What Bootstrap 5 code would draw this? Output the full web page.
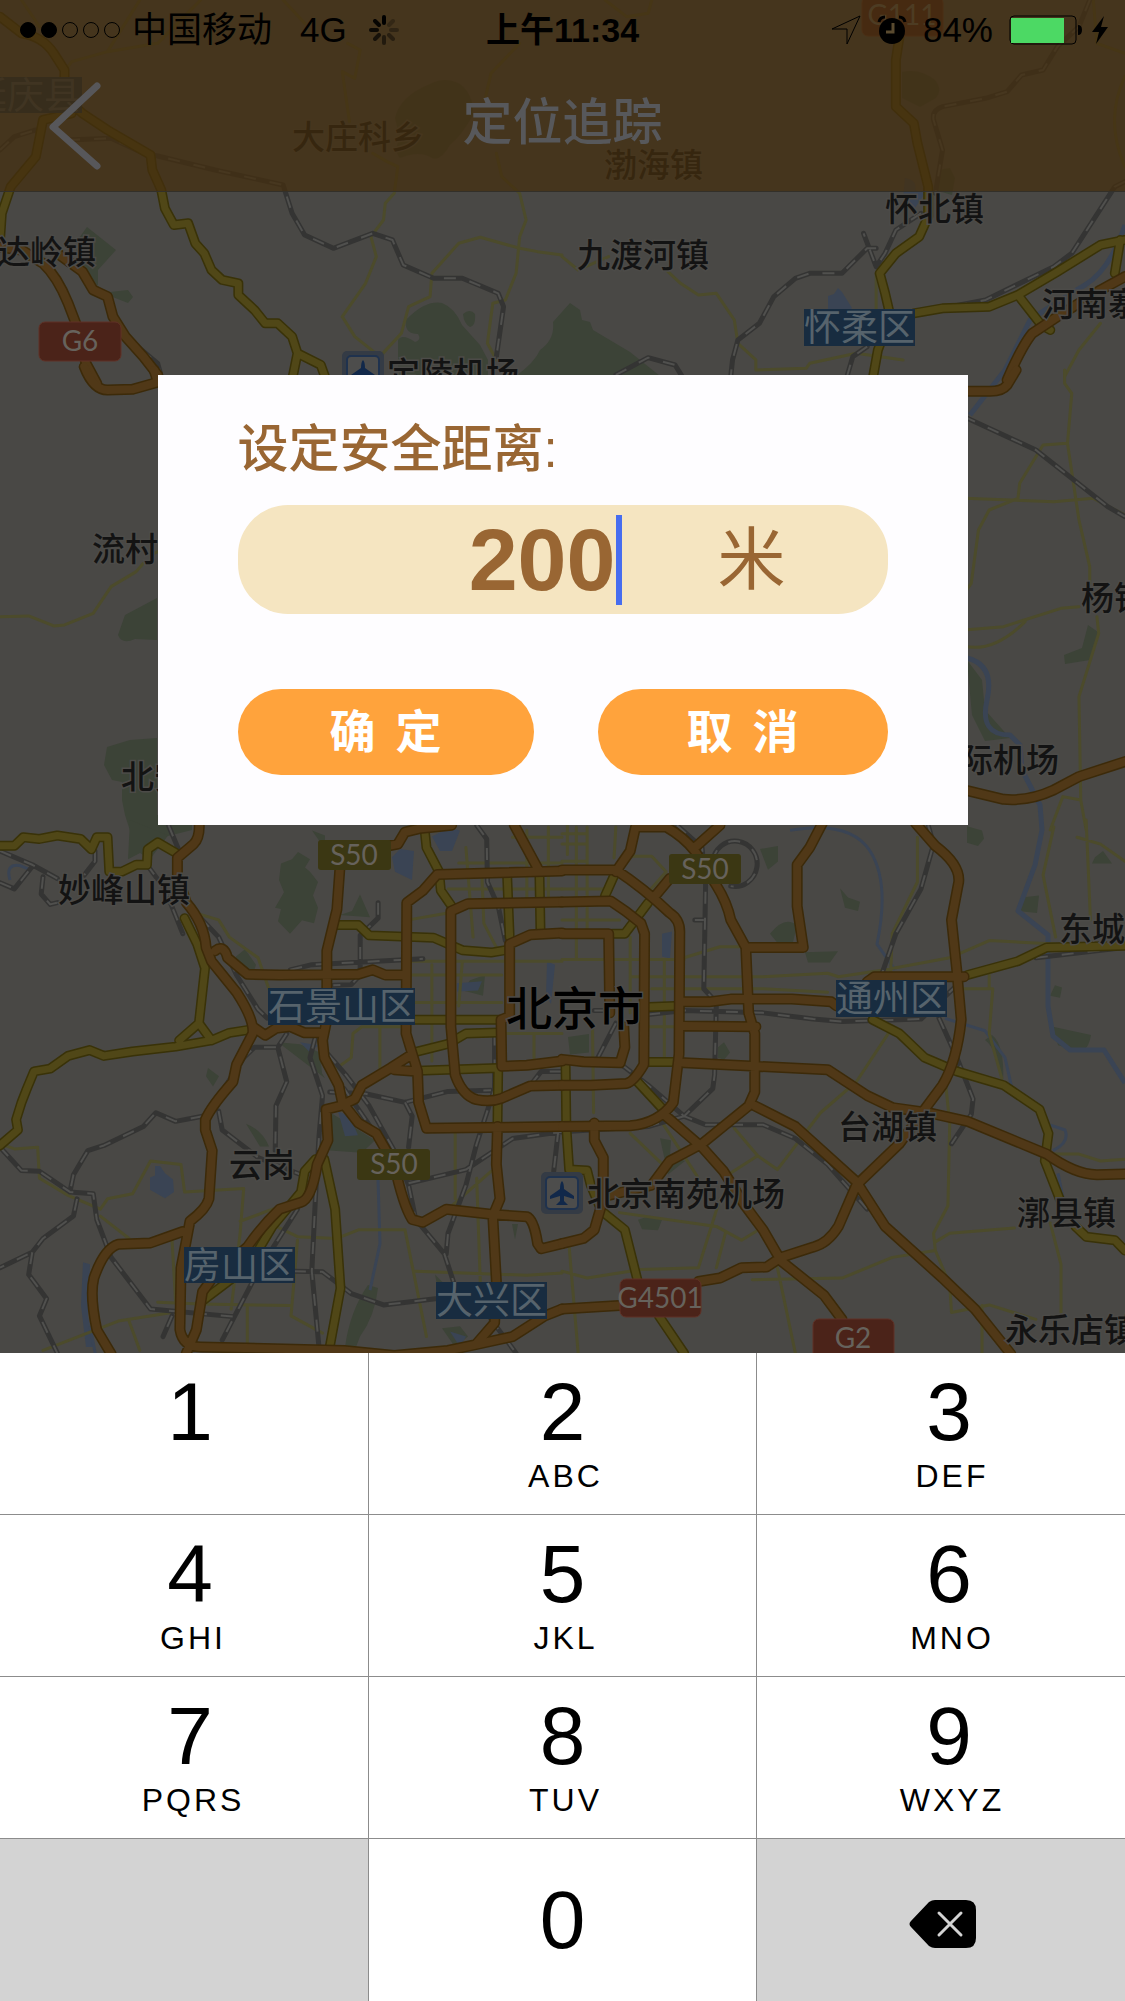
<!DOCTYPE html>
<html lang="zh-CN">
<head>
<meta charset="utf-8">
<meta name="viewport" content="width=device-width, initial-scale=1">
<title>定位追踪</title>
<link href="https://cdn.jsdelivr.net/npm/bootstrap@5.3.0/dist/css/bootstrap.min.css" rel="stylesheet">
<style>
  body { font-family: "Liberation Sans", "Noto Sans CJK SC", sans-serif; color: #000; background: #fff; }
  .map-area { background: #494845; overflow: hidden; }
  .map-art { inset: 0; }
  .map-art path, .map-art ellipse { vector-effect: non-scaling-stroke; }
  .lines { fill: none; stroke-linejoin: round; stroke-linecap: round; }
  .lane { stroke: #4c4b2b; stroke-width: 3px; }
  .rail-bed { stroke: #343433; stroke-width: 5px; }
  .rail-dash { stroke: #50504e; stroke-width: 2px; stroke-dasharray: 12 14; stroke-linecap: butt; }
  .yellow-edge { stroke: #393208; stroke-width: 10px; }
  .yellow-road { stroke: #504717; stroke-width: 7px; }
  .orange-edge { stroke: #3c2a09; stroke-width: 11px; }
  .orange-road { stroke: #503817; stroke-width: 8px; }
  .park { fill: #3c4337; }
  .lake { fill: #3a4454; }
  .river { fill: none; stroke: #3a4454; stroke-width: 5px; stroke-linejoin: round; }
  .creek { stroke-width: 3px; }
  .place { font: 500 33px "Noto Sans CJK SC", sans-serif; fill: #131313; stroke: #4c4b48; stroke-width: 3px; paint-order: stroke; }
  .city { font-size: 46px; fill: #000; }
  .district { font: 37px "Noto Sans CJK SC", sans-serif; fill: #56636c; }
  .road-no { font: 28px Lato, sans-serif; fill: #66625c; text-anchor: middle; }

  .top-bar { background: rgba(68, 46, 14, .72); border-bottom: 1px solid #333029; }
  .status-row { display: grid; grid-template-columns: 1fr auto 1fr; height: 60px; padding: 0 16px; font-size: 35px; line-height: 60px; }
  .signal-dots { gap: 5px; margin: 0 12px 0 4px; }
  .signal-dots i { width: 16px; height: 16px; border: 1px solid #000; border-radius: 50%; }
  .signal-dots .on { background: #000; }
  .net-type { margin: 0 22px 0 28px; }
  .clock-time { font-size: 34px; }
  .title-row { height: 131px; padding-bottom: 6px; }
  .page-title { font-size: 50px; line-height: 60px; font-weight: 500; color: #57585b; margin: 0; }
  .back-link { left: 44px; top: 76px; line-height: 0; }

  .distance-card { width: 72%; margin: 183px auto 0; height: 450px; padding: 39px 80px; background: #fefdff; }
  .card-label { font-size: 51px; line-height: 72px; font-weight: 500; color: #996633; margin-bottom: 19px; display: block; }
  .distance-field { height: 109px; border-radius: 50px; background: #f5e5c1; color: #996633; margin-bottom: 75px; }
  .distance-input { width: 378px; border: 0; padding: 0; background: transparent; color: inherit; font-size: 88px; line-height: 100px; font-weight: 700; text-align: right; outline: 0; }
  .caret { width: 6px; height: 90px; background: #476def; }
  .unit { font-size: 68px; line-height: 100px; margin-left: 96px; }
  .choices { display: grid; grid-template-columns: 296fr 290fr; gap: 64px; }
  .choice { height: 86px; border: 0; border-radius: 43px; background: #ffa33c; color: #fff; font-size: 46px; line-height: 86px; font-weight: 700; padding: 0; display: flex; justify-content: center; gap: 20px; }

  .keypad { display: grid; grid-template-columns: 369fr 388fr 368fr; grid-auto-rows: 162px; }
  .num-key { border: 0 solid #8c8c8c; border-width: 0 1px 1px 0; background: #fff; color: #000; padding: 14px 0 0; display: flex; flex-direction: column; align-items: center; }
  .num-key:nth-child(3n) { border-right: 0; padding-left: 16px; }
  .num-key:nth-child(3n+1) { padding-left: 12px; }
  .num-key:nth-child(n+10) { border-bottom: 0; justify-content: center; padding-top: 0; }
  .num-key.tinted { background: #d3d3d3; padding: 8px 0 0 4px; }
  .digit { font-size: 82px; line-height: 90px; }
  .letters { font-size: 32px; line-height: 38px; letter-spacing: 3px; padding-left: 6px; }
</style>
<script src="https://cdn.jsdelivr.net/npm/bootstrap@5.3.0/dist/js/bootstrap.bundle.min.js"></script>
</head>
<body>
<main class="d-flex flex-column min-vh-100">
<section class="map-area position-relative flex-grow-1">
<svg class="map-art position-absolute w-100 h-100" viewBox="0 0 1125 1353" preserveAspectRatio="xMidYMin slice" aria-label="北京地图" role="img">
<defs>
<g id="lanes">
 <g transform="scale(.3584 .3333)"><path d="M60 0L110 80M390 0L300 155L200 185L150 260M300 155L440 130L560 0M790 0L850 70M970 130L1005 150L990 235L955 215L975 365M1040 460L1080 485L1110 500L1100 580L1075 610L1070 660L1035 710L1050 770L1020 850L955 950L990 1010L1060 1070L1120 1000L1140 920L1200 890L1205 820L1280 730L1340 712L1450 745L1500 755L1568 765M1450 130L1370 220L1355 290M1385 460L1400 530L1450 580L1468 660L1450 710L1440 820L1410 900L1375 910L1360 1030L1385 1080"/></g>
 <g transform="translate(562) scale(.359 .3333)"><path d="M0 770L45 810L130 770M120 0L180 50L240 40L250 0M290 810L330 850L380 885L430 880L480 960L490 1030L540 1080L540 1110L680 1105L690 1090L820 1060L950 1080M875 820V930M1480 0L1490 130L1568 160M1568 230Q1510 360 1568 500M1500 970L1440 1050L1400 1130"/></g>
 <g transform="translate(0 370) scale(.3584 .3333)"><path d="M0 740L80 738L150 768L180 765L260 730L310 650L380 605L400 580M430 550L440 545"/></g>
 <g transform="translate(562 370) scale(.359 .3333)"><path d="M1400 0V40L1420 70L1408 220L1340 225L1275 340L1270 385M1120 385L1370 395L1480 385L1568 435M1408 220L1440 450L1470 590V640M1270 385L1190 420L1160 480L1140 640L1120 670M1120 780L1230 770L1390 715L1440 710M1120 828Q1200 850 1290 755M1490 740L1495 790L1440 980L1445 1290M1360 1380L1395 1280L1445 1290L1460 1380"/></g>
 <g transform="translate(0 820) scale(.3584 .3444)"><path d="M545 270L610 290L640 340L720 400L750 490M0 940L40 955L105 950L110 1040L190 1090L280 1130L300 1100L370 1085L420 990L505 1000L515 1080L680 1070L670 1200L645 1420M280 1150L360 1215M670 1165L760 1130M750 1170L830 1210L940 1215L1000 1190L1130 1190L1190 1500M120 1540L330 1455L480 1430M360 1455L390 1540M440 1400L560 1405L810 1410M830 1220L812 1440L900 1490M480 1220L490 1400M690 1410V1540M1160 1310L1470 1322L1568 1315M1330 1040L1340 1340M1370 1020L1250 1130M1270 910V1100M1250 200H1568M1280 125H1568M1140 290L1250 270M1300 80L1320 340M1345 170L1350 300L1385 370M1140 410H1568M1140 450H1400M1205 420V700M940 720L980 690L985 620L1010 600H1130M1060 600V720M1430 50H1568M1470 30V230M1530 20V230M1400 620H1568M1490 620V700M1160 530H1400M1290 410L1280 540"/></g>
 <g transform="translate(562 820) scale(.359 .3444)"><path d="M0 200H120M0 120H70M0 70H70M0 40H70M15 15V100M40 20V400M70 20V320M0 290H160M150 20L145 110M0 405H340M340 400L440 368H510M190 340V560M190 455H560L740 445L770 455L900 435L1080 400L1190 350L1370 360M250 490H560L740 500M285 410V700M85 600L88 850M240 600H320M1110 490H1200L1190 620L1225 750M1190 450V490M990 50V180L920 330L915 460M915 610L820 760L720 850L600 1015L545 975L480 895M545 975L470 1025M440 1100L380 1300L220 1305L70 1330L0 1310M1070 780L1080 880L1075 1120L1035 1200L1040 1250L920 1270L780 1330L530 1335M1040 1225L1080 1200L1260 1185M1040 1250L1080 1350L1085 1430L1190 1408L1320 1450M1360 1170L1390 1290V1430M1170 1410V1548M1370 20L1340 160L1375 340M1460 0L1472 290M1435 50L1500 70L1568 120M1370 970L1440 970L1500 990L1568 985M160 1140L430 1180L500 1220L540 1195M455 1200L430 1300M280 880L380 1040M190 910L280 1000M600 1300L650 1548M20 1240L45 1548M195 105L250 105L290 150L240 210"/></g>
</g>
<g id="rails">
 <g transform="scale(.3584 .3333)"><path d="M0 450L40 410L100 390M190 420L310 415L400 460L440 468L600 510L790 555L815 640L850 705L930 745L1040 700L1095 720L1125 795L1210 835L1290 835L1390 880L1405 920L1385 1070M340 1000L440 1090L450 1130"/></g>
 <g transform="translate(562) scale(.359 .3333)"><path d="M1470 0L1440 80L1380 140L1340 210L1280 225L1240 275L1180 295L1060 320Q1030 330 1035 360L1060 450L1040 580M1000 640L930 690L900 760L875 800L840 700M875 745H850L780 820H690L650 835L590 890L550 970L490 1020L475 1080L470 1130M1568 545L1540 560L1420 760L1370 800L1180 900L1060 925M150 1125L240 1073L315 1095L335 1130M850 1040L810 1070L795 1125"/></g>
 <g transform="translate(562 370) scale(.359 .3333)"><path d="M1120 140L1320 240L1520 410L1568 440"/></g>
 <g transform="translate(0 820) scale(.3584 .3444)"><path d="M0 90L90 130L160 170M0 182L40 200L90 135M120 165L115 215L140 245L160 240M265 90V120L235 160M410 130L460 200L510 330M470 15L500 90M560 285L610 340L660 450L720 550L745 575M810 435L870 420L1000 413L1180 403M1055 240V285L1005 335V450L980 478L930 480M1330 15L1358 55L1360 180L1390 250L1410 350M770 660H710L680 690L625 780M800 620L775 660L800 760L770 830L768 960M880 630L865 690L900 800L890 920L880 1100L870 1310L890 1530M610 845L620 900L720 980L840 1030M565 860L490 875L435 850L400 890L290 945L245 960L205 1030L195 1080M0 950L60 1018L110 1020L195 1080L260 1085L270 1160L310 1270L420 1420L650 1442M215 1100L205 1150L120 1215L90 1255L0 1300M90 1255L80 1320L130 1390L110 1440L160 1548M915 680L965 740L1030 830L1100 960L1140 1060L1160 1160L1240 1260L1265 1340M960 780L1080 960M920 790L1020 795L1130 820L1250 788L1370 785M1130 820L1150 860L1140 950M1380 620V780L1330 940L1300 1060L1250 1200L1245 1260M1140 1055L1300 1015L1430 925L1568 905M830 1130L720 1310L620 1510M820 1310L900 1312L980 1375L1070 1408L1215 1390M1370 1450L1440 1548M480 1440L455 1500M1558 900L1545 1020M1480 770L1510 730H1568"/></g>
 <g transform="translate(562 820) scale(.359 .3444)"><path d="M320 15L390 80L400 190L395 490L430 530L425 740L420 780L340 860M370 290H395M420 120A62 66 0 1 1 470 192M1020 15L1035 70L1000 200L930 330L890 450M90 553H130M240 565L340 553L560 560L700 578L780 585L1000 578L1110 470M1050 575L1100 690L1145 810L1140 855L1085 940M165 710L240 770L340 860L400 885H560L650 925L740 1000L850 1130M340 860L240 890L0 905M1320 400L1568 370M150 590L100 690"/></g>
</g>
<g id="yellows">
 <g transform="scale(.3584 .3333)"><path d="M0 50L60 100Q120 110 150 160L180 210V290L230 340L300 390L420 465L425 510L450 570L460 625L485 675L525 670L545 730L570 760L590 810L620 840L665 850V885L710 930L740 970H775L815 1010L830 1060L895 1095L910 1140M830 1060L815 1140M200 340L120 360L100 470L30 560L5 640L0 720"/></g>
 <g transform="translate(562) scale(.359 .3333)"><path d="M940 110L930 180V320L980 370L990 430L1020 560V650L995 710L930 760L885 820L900 880L915 950L880 1050L865 1140M980 940L1060 925L1190 920L1270 885L1380 815L1500 735L1568 720M1270 885L1335 975L1360 990M1555 720L1540 820"/></g>
 <g transform="translate(0 820) scale(.3584 .3444)"><path d="M0 75H40L65 50L110 55L160 45L225 55L255 85L270 50H300L305 150H340L380 130H410L412 85L440 65L490 95M515 285L550 360L572 430L555 590L500 640M555 590L590 640M690 610L640 618L590 640L490 658L370 672L290 685L250 668L190 685L140 722L95 730L75 780L60 820L45 870L50 900L0 945M935 305H1000L1030 335L1210 342L1290 378L1370 385L1410 378M1185 30L1190 80L1225 150L1230 205L1260 250M1415 160L1422 340M1505 150L1508 320M1155 580H1400M1155 675L1250 650L1300 620L1390 617M1165 728L1390 720L1388 890M905 985L935 1130L950 1360L920 1530M880 985L850 1020L840 1080L760 1180L720 1250M700 1290L560 1400"/></g>
 <g transform="translate(562 820) scale(.359 .3444)"><path d="M120 220L150 150M140 330H175L240 240M242 543L315 540M242 703H320M210 760L290 850M10 710L12 890L20 1015L70 1018L80 1060L110 1135L175 1190L210 1335M270 1440L340 1548M865 580L940 620L1010 690L1100 730L1230 770L1330 840L1355 910L1345 990L1390 1110M1430 1180L1460 1210L1540 1220L1568 1250M1130 450L1270 410L1350 370L1568 365"/></g>
</g>
<g id="oranges">
 <g transform="scale(.3584 .3333)"><path d="M-10 740L60 750L120 790Q160 830 190 910L215 980L240 1090L270 1150M160 760L230 815L260 870L300 890L315 950L350 1010L400 1070L440 1125"/></g>
 <g transform="translate(0 370) scale(.3584 .3333)"><path d="M235 -10Q260 60 300 60L370 58L445 35M440 35L430 0"/></g>
 <g transform="translate(562) scale(.359 .3333)"><path d="M1568 830L1500 870L1380 950L1310 1000Q1280 1040 1240 1140"/></g>
 <g transform="translate(562 370) scale(.359 .3333)"><path d="M1265 0L1240 45Q1225 65 1190 64H1120M1120 1260L1230 1288Q1300 1295 1370 1260L1440 1220L1568 1175"/></g>
 <g transform="translate(0 820) scale(.3584 .3444)"><path d="M555 0Q560 50 540 70L495 110V160L520 240Q570 300 575 370L590 410L660 500Q710 580 705 620L660 710L650 760Q590 830 573 870V900L592 960L583 1100Q575 1130 530 1165L520 1220L505 1300L502 1480Q510 1530 560 1530L960 1540L1100 1555L1250 1540L1320 1525L1430 1500L1520 1440L1568 1420M510 1195L420 1228L330 1232Q290 1245 262 1330Q250 1380 270 1480L310 1550M600 380Q625 360 635 400L690 448L780 450L1000 448L1040 435L1075 450H1125M705 600L740 625L770 605L810 600L850 618H890M948 145L940 260L912 380V580L900 640L905 690L945 770L955 820L1000 880L1050 910L1100 1000Q1125 1120 1150 1160L1180 1168L1245 1130L1370 1145L1470 1152Q1490 1160 1500 1230L1510 1245L1568 1230M1085 75L1110 70L1130 35L1170 25L1260 15M1568 148L1220 158L1180 205L1135 240L1133 620L1165 730L1168 820L1190 895L1568 890M1568 238L1305 243L1258 265V600L1270 740Q1290 800 1330 812Q1370 820 1400 808L1480 772L1568 770M1568 328L1480 333L1422 360V570L1398 580L1400 715L1470 712L1568 700M1435 15L1500 140M1100 725L1165 730M1150 680L1090 720L1010 770L990 810L950 830L910 840L915 930L885 1000Q870 1100 840 1110L780 1130Q730 1180 690 1240L600 1320L565 1370L548 1480L520 1548M1388 890L1385 1000L1395 1100L1375 1150L1385 1340L1380 1460L1330 1520"/></g>
 <g transform="translate(562 820) scale(.359 .3444)"><path d="M0 145H150Q230 200 300 270Q330 290 328 330L326 680L310 820Q270 880 190 888L0 890M0 238L135 235Q180 265 220 300L230 330L228 710Q200 760 180 765L80 770H0M0 330H130L133 560M172 600L175 660L162 705L60 702L0 695M150 150L190 90L205 20H290Q340 50 370 90L430 190Q460 240 470 290L512 370L520 560L537 620V790L520 830L390 940L300 990L250 1060L130 1090M440 15L370 80M300 170L260 220M725 10L690 80L655 130V250L672 370L512 370M985 10L1040 75Q1110 130 1105 180L1085 290L1100 440L1112 580Q1100 700 1060 770L1010 840L940 940L820 1060L770 1180Q740 1230 700 1240L610 1270L570 1298L500 1300L440 1330L380 1340M850 470L870 455H1120M340 528H410L470 520H640L750 528L765 540M340 598L540 600M340 705L540 715L740 725L850 800L920 835L1020 850L1130 875L1350 970Q1430 1030 1490 1030L1568 1028M290 860L390 950L450 1020L510 1120L560 1190L610 1280L730 1380L780 1450M537 830L650 890L820 1050L900 1180L1060 1330L1150 1420L1250 1550M90 880V930L115 980V1100L90 1190L60 1215L0 1230M0 1420L160 1410"/></g>
</g>
<g id="plane"><rect x="-3" y="-3" width="42" height="42" rx="5" fill="#343b45"/><rect x="2" y="2" width="32" height="32" rx="4" fill="#4d4d4c" stroke="#1f324e" stroke-width="2"/><path d="M18 6Q20 8 20 14L30 21V24L20 21L20 26L24 30H12L16 26L16 21L6 24V21L16 14Q16 8 18 6Z" fill="#11284a"/></g>
</defs>

<!-- parks and water -->
<g class="park">
 <path d="M87 227L116 250L98 270V288L110 292L128 290L133 297L128 303L110 296L91 280L74 245ZM395 118Q400 96 430 84Q445 76 460 84Q474 95 473 115Q462 135 450 145Q440 162 432 158Q420 150 400 158Q393 150 400 138ZM398 376L398 340Q402 333 415 342Q422 340 418 334Q404 334 406 320Q425 300 442 303Q455 308 462 325L480 345L488 360V376ZM463 314Q470 308 475 314Q476 326 470 327Q464 324 463 314ZM516 376Q535 362 540 350Q555 340 553 322L570 303L580 310L582 320L590 322L593 330L630 352L660 376ZM902 72Q920 68 935 80Q943 90 936 98L920 107L902 98ZM938 170L950 168L955 178L952 195L935 190ZM157 598L125 615L118 635Q122 645 135 639L157 640ZM157 738L130 740L107 747L104 765L112 780L122 782V800L125 815L133 840L160 838L192 830V818L157 815Z"/>
 <path transform="translate(0 -27) scale(1 1.033)" d="M130 820L128 858L140 852L150 858L168 835ZM281 862L292 858L298 851L310 858L305 866L310 870L318 880L313 893L318 905L314 920L302 917L290 930L278 918L281 906L275 905L284 890L279 878ZM312 830L325 848V835ZM340 912L352 908L360 892L370 914ZM236 952L245 945L256 960L254 966L236 962ZM208 1060L219 1068L213 1078L206 1068ZM246 1114Q262 1120 269 1136L260 1136ZM325 1100L375 1130L362 1142L330 1140ZM278 1035L300 1037L320 1045L322 1065L325 1070ZM345 1330Q350 1295 368 1270L378 1273Q375 1300 360 1320L356 1330ZM435 1260L450 1275V1285H440ZM442 1312L460 1310L468 1320L455 1330ZM512 1211H518L515 1226ZM470 975L485 970L483 990L463 985Z"/>
 <path transform="translate(0 -27) scale(1 1.033)" d="M760 848L778 845V860L768 868ZM770 930Q785 912 797 922L793 938L780 942ZM840 886L848 895L860 899L858 908L845 905ZM805 948L838 947L830 958L808 958ZM967 826L982 830L984 838L978 845L967 842ZM1022 895L1039 893L1037 910L1018 908ZM1095 856L1103 850L1112 862L1092 862ZM1055 980L1062 982L1060 992L1050 990ZM1053 1020L1091 1028Q1088 1045 1078 1043L1058 1038ZM568 1030L589 1027V1045L570 1047ZM718 1040L724 1035L730 1045L724 1052L718 1050ZM638 1207L650 1203L662 1207L658 1217L642 1216ZM660 1128L671 1130L670 1145L685 1150L668 1163Z"/>
 <path d="M1088 625L1098 632L1090 660L1065 664L1064 655L1082 648ZM967 660L982 680L985 710L1010 738L985 741L972 715Z"/>
 <path d="M992 1035Q1005 1045 1003 1083Q998 1050 985 1040Z"/>
</g>
<g class="lake">
 <path d="M828 296L834 294L838 288L842 292L852 308L846 314H828ZM905 178Q918 180 915 190L925 193L915 208L903 200Z"/>
 <path transform="translate(0 -27) scale(1 1.033)" d="M392 856L400 848L414 850L412 878L395 870ZM432 836L448 828L460 830L452 850H440ZM150 1166L155 1164V1155L160 1155L165 1162L173 1168L174 1180L165 1186L150 1178ZM338 1102L350 1107L358 1125L345 1126ZM83 1248L90 1250L88 1300L94 1330H86L81 1290ZM547 957L555 960L551 998L546 990ZM300 1035L318 1038L310 1045ZM457 978L482 976L478 985L457 986ZM662 930L672 928L670 954L662 952ZM450 1315L466 1320L460 1330Z"/>
</g>
<g class="river">
 <path d="M1125 225Q1110 270 1085 285T1030 320L1005 370L970 415"/>
 <path d="M967 658Q995 665 987 700T1010 735L1020 745L1022 770L1040 805L1042 830L1035 865L1018 911L1048 935V1006L1053 1036L1070 1050L1104 1050L1125 1083"/>
 <path class="creek" transform="translate(0 -27) scale(1 1.033)" d="M10 878Q5 862 20 864L30 868M790 830Q850 820 870 850T877 940L895 965M945 1012L985 1024L1005 1050L1012 1080M1030 1090L1040 1105M1050 1115L1065 1120Q1070 1132 1053 1140M1058 1162L1065 1195M378 1168L380 1230L370 1275M90 1310L98 1350"/>
</g>

<!-- transport network -->
<g class="lines">
 <use href="#lanes" class="lane"/>
 <use href="#rails" class="rail-bed"/><use href="#rails" class="rail-dash"/>
 <use href="#yellows" class="yellow-edge"/><use href="#yellows" class="yellow-road"/>
 <use href="#oranges" class="orange-edge"/><use href="#oranges" class="orange-road"/>
</g>

<use href="#plane" x="345" y="354"/><use href="#plane" x="544" y="1175"/>

<!-- road shields -->
<g fill="#4b2319" stroke="#603126">
 <rect x="39" y="322" width="82" height="39" rx="6"/><rect x="862" y="-3" width="81" height="39" rx="6"/><rect x="620" y="1279" width="81" height="38" rx="6"/><rect x="813" y="1319" width="81" height="50" rx="6"/>
</g>
<g fill="#3b3713">
 <rect x="318" y="840" width="73" height="30" rx="3"/><rect x="357" y="1149" width="73" height="31" rx="3"/><rect x="669" y="854" width="72" height="30" rx="3"/>
</g>
<g class="road-no">
 <text x="80" y="351">G6</text><text x="902" y="25">G111</text><text x="354" y="865">S50</text><text x="394" y="1174">S50</text><text x="705" y="879">S50</text><text x="660" y="1308">G4501</text><text x="853" y="1348">G2</text>
</g>

<!-- districts -->
<g fill="#182c40">
 <rect x="-30" y="77" width="112" height="36"/><rect x="804" y="309" width="111" height="37"/><rect x="268" y="988" width="147" height="37"/><rect x="184" y="1247" width="111" height="36"/><rect x="436" y="1282" width="111" height="37"/><rect x="836" y="980" width="111" height="37"/>
</g>
<g class="district">
 <text x="-30" y="109" fill-opacity=".5">延庆县</text><text x="804" y="341">怀柔区</text><text x="268" y="1020">石景山区</text><text x="184" y="1279">房山区</text><text x="436" y="1314">大兴区</text><text x="836" y="1012">通州区</text>
</g>
<g class="place">
 <text x="292" y="149">大庄科乡</text><text x="604" y="177">渤海镇</text><text x="885" y="221">怀北镇</text><text x="577" y="267">九渡河镇</text><text x="-3" y="264">达岭镇</text><text x="1042" y="316">河南寨镇</text><text x="387" y="386">定陵机场</text><text x="92" y="561">流村镇</text><text x="121" y="789">北安河</text><text x="1081" y="610">杨镇</text><text x="960" y="772">际机场</text><text x="58" y="902">妙峰山镇</text><text x="1059" y="941">东城镇</text><text x="229" y="1177">云岗</text><text x="838" y="1139">台湖镇</text><text x="587" y="1206">北京南苑机场</text><text x="1017" y="1225">漷县镇</text><text x="1005" y="1342">永乐店镇</text>
 <text class="city" x="506" y="1025">北京市</text>
</g>
</svg>

<header class="top-bar position-relative">
 <div class="status-row">
  <div class="d-flex align-items-center">
   <span class="signal-dots d-flex"><i class="on"></i><i class="on"></i><i></i><i></i><i></i></span>
   <span>中国移动</span><span class="net-type">4G</span>
   <svg width="30" height="30" viewBox="-15 -15 30 30" stroke="#000" stroke-width="4" stroke-linecap="round" aria-hidden="true"><path d="M0 -7V-13"/><path d="M-5 -5L-9 -9" opacity=".9"/><path d="M-7 0H-13" opacity=".8"/><path d="M-5 5L-9 9" opacity=".65"/><path d="M0 7V13" opacity=".5"/><path d="M5 5L9 9" opacity=".4"/><path d="M7 0H13" opacity=".3"/><path d="M5 -5L9 -9" opacity=".25"/></svg>
  </div>
  <strong class="clock-time">上午11:34</strong>
  <div class="d-flex align-items-center justify-content-end">
   <svg width="30" height="30" viewBox="0 0 30 30" fill="none" stroke="#000" aria-hidden="true"><path d="M1 14L29 1L16 29V14Z"/></svg>
   <svg class="mx-3" width="30" height="30" viewBox="0 0 30 30" aria-hidden="true"><circle cx="15" cy="16" r="13"/><path d="M2 7Q3 2 8 2M22 2Q27 2 28 7" fill="none" stroke="#000" stroke-width="3"/><path d="M16 8V17H9" fill="none" stroke="#594a2f" stroke-width="3"/></svg>
   <span>84%</span>
   <svg class="ms-3" width="100" height="30" viewBox="0 0 100 30" aria-hidden="true"><rect x="1" y="1" width="66" height="28" rx="4" fill="none" stroke="#000"/><rect x="2" y="3" width="53" height="25" fill="#4cd964"/><path d="M69 10Q73 10 73 15T69 20Z"/><path d="M95 1L83 17H90L87 29L99 12H92Z"/></svg>
  </div>
 </div>
 <div class="title-row d-flex justify-content-center align-items-center">
  <a class="back-link position-absolute" href="#" aria-label="返回"><svg width="64" height="100" viewBox="0 0 64 100" fill="none" stroke="#57575a" stroke-width="7" stroke-linecap="round" stroke-linejoin="round"><path d="M53 10L9 51L53 90"/></svg></a>
  <h1 class="page-title">定位追踪</h1>
 </div>
</header>

<form class="distance-card position-relative">
 <label class="card-label" for="distance">设定安全距离:</label>
 <div class="distance-field d-flex align-items-center">
  <input class="distance-input" id="distance" type="text" inputmode="numeric" value="200">
  <span class="caret"></span><span class="unit">米</span>
 </div>
 <div class="choices">
  <button class="choice" type="button"><span>确</span><span>定</span></button>
  <button class="choice" type="button"><span>取</span><span>消</span></button>
 </div>
</form>
</section>

<section class="keypad" aria-label="数字键盘">
 <button class="num-key" type="button"><span class="digit">1</span></button>
 <button class="num-key" type="button"><span class="digit">2</span><span class="letters">ABC</span></button>
 <button class="num-key" type="button"><span class="digit">3</span><span class="letters">DEF</span></button>
 <button class="num-key" type="button"><span class="digit">4</span><span class="letters">GHI</span></button>
 <button class="num-key" type="button"><span class="digit">5</span><span class="letters">JKL</span></button>
 <button class="num-key" type="button"><span class="digit">6</span><span class="letters">MNO</span></button>
 <button class="num-key" type="button"><span class="digit">7</span><span class="letters">PQRS</span></button>
 <button class="num-key" type="button"><span class="digit">8</span><span class="letters">TUV</span></button>
 <button class="num-key" type="button"><span class="digit">9</span><span class="letters">WXYZ</span></button>
 <span class="num-key tinted"></span>
 <button class="num-key" type="button"><span class="digit">0</span></button>
 <button class="num-key tinted" type="button" aria-label="删除"><svg width="68" height="50" viewBox="0 0 68 50"><path d="M2 22L20 3Q23 1 26 1H57Q67 1 67 11V39Q67 49 57 49H26Q23 49 20 47L2 28Q-1 25 2 22Z"/><path d="M30 14L52 36M52 14L30 36" stroke="#d3d3d3" stroke-width="3" stroke-linecap="round"/></svg></button>
</section>
</main>
</body>
</html>
